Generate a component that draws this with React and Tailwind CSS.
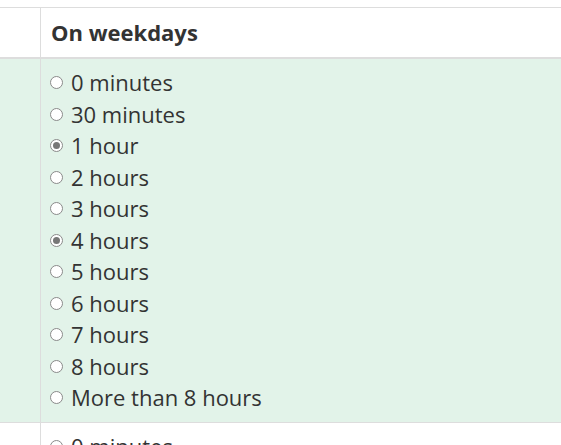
const OPTIONS = [
  '0 minutes',
  '30 minutes',
  '1 hour',
  '2 hours',
  '3 hours',
  '4 hours',
  '5 hours',
  '6 hours',
  '7 hours',
  '8 hours',
  'More than 8 hours',
]

function Radio({ checked }) {
  return (
    <span className="inline-flex items-center justify-center w-[13px] h-[13px] rounded-full border border-[#8a8a8a] bg-white shrink-0">
      {checked && <span className="w-[7px] h-[7px] rounded-full bg-[#777]" />}
    </span>
  )
}

function OptionList({ selected, items = OPTIONS }) {
  return (
    <div className="py-2">
      {items.map((o) => (
        <label key={o} className="flex items-center gap-[8px] leading-[31.5px] h-[31.5px]">
          <Radio checked={selected.includes(o)} />
          <span>{o}</span>
        </label>
      ))}
    </div>
  )
}

export default function App() {
  return (
    <div
      className="w-[561px] h-[445px] overflow-hidden bg-white text-[#333] text-[22px]"
      style={{ fontFamily: '"Open Sans", "Liberation Sans", sans-serif' }}
    >
      <div className="h-[7px]" />
      <div className="w-[900px] border-t border-[#ddd]">
        <div className="flex border-b-2 border-[#ddd]">
          <div className="w-[41px] shrink-0 border-r border-[#ddd]" />
          <div className="flex-1 h-[49px] flex items-center pl-[10px] font-bold">On weekdays</div>
        </div>
        <div className="flex bg-[#e2f3e9] border-b border-[#ddd]">
          <div className="w-[41px] shrink-0 border-r border-[#ddd]" />
          <div className="flex-1 pl-[9px]">
            <OptionList selected={['1 hour', '4 hours']} />
          </div>
        </div>
        <div className="flex">
          <div className="w-[41px] shrink-0 border-r border-[#ddd]" />
          <div className="flex-1 pl-[9px]">
            <OptionList selected={[]} items={OPTIONS.slice(0, 1)} />
          </div>
        </div>
      </div>
    </div>
  )
}
